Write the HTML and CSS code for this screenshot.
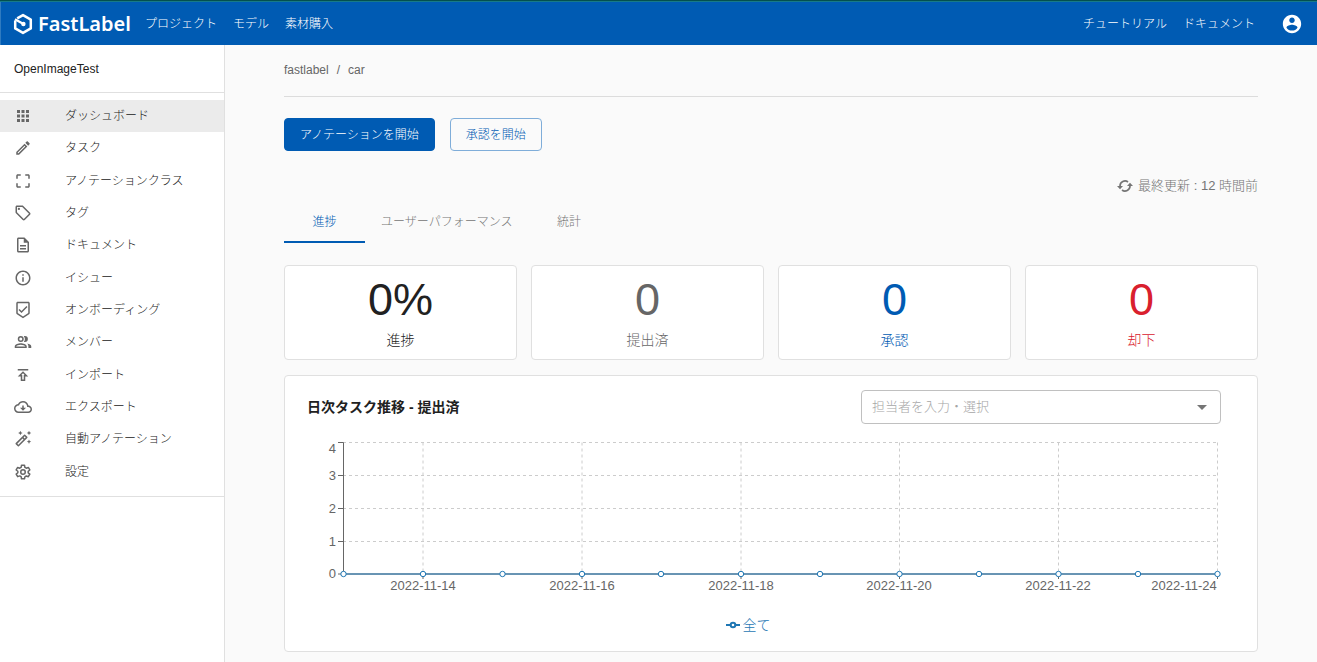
FILE: index.html
```html
<!DOCTYPE html>
<html lang="ja">
<head>
<meta charset="utf-8">
<meta name="viewport" content="width=device-width, initial-scale=1">
<title>FastLabel</title>
<link rel="stylesheet" href="styles.css">
</head>
<body>
<header class="topbar">
  <a class="brand" href="#">
    <svg class="brand-mark" viewBox="0 0 22 22" aria-hidden="true"><path d="M3.200 7.600V15.400L11 19.900l7.800-4.500V6.600L11 2.100 5.200 5.400" fill="none" stroke="#fff" stroke-width="2.500" stroke-linejoin="round"/><path d="M3 6.200 11 10.800" fill="none" stroke="#fff" stroke-width="2.200"/><circle cx="11.400" cy="11" r="2.200" fill="#fff"/></svg>
    <span class="brand-name">FastLabel</span>
  </a>
  <nav class="topnav">
    <a href="#">プロジェクト</a>
    <a href="#">モデル</a>
    <a href="#">素材購入</a>
  </nav>
  <nav class="topnav topnav-end">
    <a href="#">チュートリアル</a>
    <a href="#">ドキュメント</a>
  </nav>
  <button class="account" type="button" aria-label="アカウント"><svg viewBox="0 0 24 24"><path d="M12 2C6.48 2 2 6.48 2 12s4.48 10 10 10 10-4.48 10-10S17.52 2 12 2zm0 3c1.66 0 3 1.34 3 3s-1.34 3-3 3-3-1.34-3-3 1.34-3 3-3zm0 14.200c-2.500 0-4.710-1.280-6-3.220.030-1.990 4-3.080 6-3.080 1.990 0 5.970 1.090 6 3.080-1.290 1.940-3.500 3.220-6 3.220z"/></svg></button>
</header>
<div class="shell">
  <aside class="sidebar">
    <div class="project-name">OpenImageTest</div>
    <nav class="menu">
      <a class="menu-item is-active" href="#"><svg viewBox="0 0 24 24"><path d="M4 8h4V4H4v4zm6 12h4v-4h-4v4zm-6 0h4v-4H4v4zm0-6h4v-4H4v4zm6 0h4v-4h-4v4zm6-10v4h4V4h-4zm-6 4h4V4h-4v4zm6 6h4v-4h-4v4zm0 6h4v-4h-4v4z"/></svg>ダッシュボード</a>
      <a class="menu-item" href="#"><svg viewBox="0 0 24 24"><path d="M14.060 9.020l.92.920L5.920 19H5v-.920l9.060-9.060M17.660 3c-.250 0-.510.100-.700.290l-1.830 1.830 3.750 3.750 1.830-1.830c.390-.390.390-1.020 0-1.410l-2.340-2.340c-.200-.200-.450-.290-.710-.290zm-3.600 3.190L3 17.250V21h3.750L17.810 9.940l-3.750-3.750z"/></svg>タスク</a>
      <a class="menu-item" href="#"><svg viewBox="0 0 24 24"><path d="M3 5v4h2V5h4V3H5c-1.100 0-2 .900-2 2zm2 10H3v4c0 1.100.900 2 2 2h4v-2H5v-4zm14 4h-4v2h4c1.100 0 2-.900 2-2v-4h-2v4zm0-16h-4v2h4v4h2V5c0-1.100-.900-2-2-2z"/></svg>アノテーションクラス</a>
      <a class="menu-item" href="#"><svg viewBox="0 0 24 24"><path d="M21.410 11.580l-9-9C12.050 2.220 11.550 2 11 2H4c-1.100 0-2 .900-2 2v7c0 .550.220 1.050.590 1.420l9 9c.360.360.860.580 1.410.580s1.050-.220 1.410-.590l7-7c.370-.360.590-.860.590-1.410s-.230-1.060-.590-1.420zM13 20.010L4 11V4h7v-.010l9 9-7 7.020z"/><circle cx="6.500" cy="6.500" r="1.500"/></svg>タグ</a>
      <a class="menu-item" href="#"><svg viewBox="0 0 24 24"><path d="M8 16h8v2H8zm0-4h8v2H8zm6-10H6c-1.100 0-2 .900-2 2v16c0 1.100.890 2 1.990 2H18c1.100 0 2-.900 2-2V8l-6-6zm4 18H6V4h7v5h5v11z"/></svg>ドキュメント</a>
      <a class="menu-item" href="#"><svg viewBox="0 0 24 24"><path d="M11 7h2v2h-2zm0 4h2v6h-2zm1-9C6.480 2 2 6.480 2 12s4.480 10 10 10 10-4.480 10-10S17.520 2 12 2zm0 18c-4.410 0-8-3.590-8-8s3.590-8 8-8 8 3.590 8 8-3.590 8-8 8z"/></svg>イシュー</a>
      <a class="menu-item" href="#"><svg viewBox="0 0 24 24"><path d="M19 1H5c-1.100 0-1.990.900-1.990 2L3 15.930c0 .690.350 1.300.880 1.660L12 23l8.110-5.410c.530-.360.880-.970.880-1.660L21 3c0-1.100-.900-2-2-2zm-7 19.600l-7-4.660V3h14v12.930l-7 4.670zm-2.010-7.420l-2.580-2.590L6 12l4 4 8-8-1.420-1.420z"/></svg>オンボーディング</a>
      <a class="menu-item" href="#"><svg viewBox="0 0 24 24"><path d="M9 13.500c-3 0-8 1.400-8 4.200V20h16v-2.300c0-2.800-5-4.200-8-4.200zM3 18v-.400c.4-.900 3.300-2.100 6-2.100s5.600 1.200 6 2.100v.4H3zM9 12a4 4 0 1 0 0-8 4 4 0 0 0 0 8zm0-6a2 2 0 1 1 0 4 2 2 0 0 1 0-4zm5.500 6a4 4 0 1 0 0-8c-.5 0-1 .1-1.400.300a6 6 0 0 1 0 7.400c.4.200.9.300 1.400.300zm3 2c1 .9 1.700 2.100 1.700 3.700V20H23v-2.300c0-2-2.500-3.200-5.500-3.700z"/></svg>メンバー</a>
      <a class="menu-item" href="#"><svg viewBox="0 0 24 24"><path d="M5 4v2h14V4H5zm0 10h4v6h6v-6h4l-7-7-7 7zm8-2v6h-2v-6H9.830L12 9.830 14.170 12H13z"/></svg>インポート</a>
      <a class="menu-item" href="#"><svg viewBox="0 0 24 24"><path d="M19.350 10.040C18.670 6.590 15.640 4 12 4 9.110 4 6.600 5.640 5.350 8.040 2.340 8.360 0 10.910 0 14c0 3.310 2.690 6 6 6h13c2.760 0 5-2.240 5-5 0-2.640-2.050-4.780-4.650-4.960zM19 18H6c-2.210 0-4-1.790-4-4s1.790-4 4-4h.710C7.370 7.690 9.480 6 12 6c3.040 0 5.500 2.460 5.500 5.500v.500H19c1.660 0 3 1.340 3 3s-1.340 3-3 3zm-6-8h-2v3H8l4 4 4-4h-3z"/></svg>エクスポート</a>
      <a class="menu-item" href="#"><svg viewBox="0 0 24 24"><path d="M20 7l.940-2.060L23 4l-2.060-.940L20 1l-.940 2.060L17 4l2.060.940zM8.500 7l.940-2.060L11.500 4l-2.060-.940L8.500 1l-.940 2.060L5.500 4l2.060.940zM20 12.500l-.940 2.060-2.060.940 2.060.940.940 2.060.940-2.060L23 15.500l-2.060-.940zM17.710 9.120l-2.830-2.830a1 1 0 0 0-1.410 0L2.290 17.460a1 1 0 0 0 0 1.410l2.830 2.830a1 1 0 0 0 1.410 0l11.170-11.170a1 1 0 0 0 .010-1.410zM14.210 8.420l1.410 1.410-1.420 1.420-1.410-1.410zM5.830 19.590l-1.410-1.410 6.910-6.910 1.410 1.410z"/></svg>自動アノテーション</a>
      <a class="menu-item" href="#"><svg viewBox="0 0 24 24" fill="none"><path class="line" d="M10 3h4l.5 2.800 1.900 1.100 2.700-1 2 3.400-2.200 1.800v2l2.200 1.800-2 3.400-2.700-1-1.900 1.100L14 21h-4l-.5-2.700-1.900-1.100-2.700 1-2-3.400 2.200-1.800v-2L2.900 9.300l2-3.400 2.700 1 1.900-1.100z"/><circle class="line" cx="12" cy="12" r="3"/></svg>設定</a>
    </nav>
  </aside>
  <main class="content">
    <nav class="breadcrumb"><a href="#">fastlabel</a><span>/</span><a href="#">car</a></nav>
    <div class="actions">
      <button class="btn btn-primary" type="button">アノテーションを開始</button>
      <button class="btn btn-outline" type="button">承認を開始</button>
    </div>
    <div class="updated"><svg viewBox="0 0 24 24" aria-hidden="true"><path d="M4.500 13.500V12A7.500 7.500 0 0 1 16.500 6M19.500 10.500V12A7.500 7.500 0 0 1 7.500 18" fill="none" stroke="currentColor" stroke-width="2.500"/><path d="M0 12h9l-4.500 5zM15 12h9l-4.500-5z"/></svg><span>最終更新 : 12 時間前</span></div>
    <div class="tabs" role="tablist">
      <button class="tab is-selected" type="button" role="tab" aria-selected="true">進捗</button>
      <button class="tab" type="button" role="tab" aria-selected="false">ユーザーパフォーマンス</button>
      <button class="tab" type="button" role="tab" aria-selected="false">統計</button>
    </div>
    <section class="stats">
      <div class="stat"><span class="stat-value">0%</span><span class="stat-label">進捗</span></div>
      <div class="stat stat-muted"><span class="stat-value">0</span><span class="stat-label">提出済</span></div>
      <div class="stat stat-blue"><span class="stat-value">0</span><span class="stat-label">承認</span></div>
      <div class="stat stat-red"><span class="stat-value">0</span><span class="stat-label">却下</span></div>
    </section>
    <section class="panel">
      <div class="panel-head">
        <h2 class="panel-title">日次タスク推移 - 提出済</h2>
        <div class="combo">
          <input class="combo-input" type="text" aria-label="担当者" placeholder="担当者を入力・選択">
          <button class="combo-toggle" type="button" aria-label="開く"><svg viewBox="0 0 24 24"><path d="M7 10l5 5 5-5z"/></svg></button>
        </div>
      </div>
      <svg class="chart" viewBox="0 0 914 168" role="img" aria-label="日次タスク推移">
        <path class="grid" d="M36 8.500H911M36 41.500H911M36 74.500H911M36 107.500H911M116 8.500V140M275 8.500V140M434 8.500V140M592.500 8.500V140M751.500 8.500V140M910.500 8.500V140"/>
        <path class="axis" d="M36.500 8.500V140M31 8.500h5.500M31 41.500h5.500M31 74.500h5.500M31 107.500h5.500M31 140h5.500M116 140v5M275 140v5M434 140v5M592.500 140v5M751.500 140v5M910.500 140v5M36 140H911"/>
        <path class="series" d="M36.500 140H910.500"/>
        <g class="dots"><circle cx="36.500" cy="140" r="2.700"/><circle cx="116" cy="140" r="2.700"/><circle cx="195.500" cy="140" r="2.700"/><circle cx="275" cy="140" r="2.700"/><circle cx="354" cy="140" r="2.700"/><circle cx="434" cy="140" r="2.700"/><circle cx="513" cy="140" r="2.700"/><circle cx="592.500" cy="140" r="2.700"/><circle cx="672" cy="140" r="2.700"/><circle cx="751.500" cy="140" r="2.700"/><circle cx="831" cy="140" r="2.700"/><circle cx="910.500" cy="140" r="2.700"/></g>
        <g class="tick tick-y"><text x="29" y="19">4</text><text x="29" y="46">3</text><text x="29" y="79">2</text><text x="29" y="112">1</text><text x="29" y="144">0</text></g>
        <g class="tick tick-x"><text x="116" y="156">2022-11-14</text><text x="275" y="156">2022-11-16</text><text x="434" y="156">2022-11-18</text><text x="592" y="156">2022-11-20</text><text x="751" y="156">2022-11-22</text><text x="877" y="156">2022-11-24</text></g>
      </svg>
      <div class="legend"><svg viewBox="0 0 14 14" aria-hidden="true"><path d="M0 7h4.500M9.500 7H14"/><circle cx="7" cy="7" r="2.300"/></svg><span>全て</span></div>
    </section>
  </main>
</div>
</body>
</html>
```
FILE: styles.css
```css
* { box-sizing: border-box; }

body {
  margin: 0;
  min-height: 100vh;
  display: flex;
  flex-direction: column;
  background: #fafafa;
  color: #212121;
  font-family: "Liberation Sans", "Noto Sans CJK JP", sans-serif;
  font-size: 12px;
  font-weight: 300;
  line-height: 20px;
}

a { color: inherit; text-decoration: none; }
button { font: inherit; cursor: pointer; }
svg { display: block; fill: currentColor; flex: none; }

.topbar {
  display: flex;
  align-items: center;
  height: 45px;
  padding: 1px 14px 0 12px;
  background: #005bb3;
  border-top: 1px solid #04504f;
  box-shadow: inset 0 1px #177a88, inset 1px 0 #2f7bc0;
  color: #fff;
}
.brand { display: flex; align-items: center; gap: 4px; }
.brand-mark { width: 22px; height: 22px; }
.brand-name {
  font-family: "Noto Sans", sans-serif;
  font-size: 20px;
  font-weight: 600;
  line-height: 24px;
}
.topnav { display: flex; gap: 16px; margin-left: 14px; }
.topnav-end { margin-left: auto; }
.account {
  margin-left: 26px;
  padding: 0;
  border: 0;
  background: none;
  color: #fff;
}
.account svg { width: 22px; height: 22px; }

.shell { display: flex; flex: 1; align-items: stretch; }

.sidebar {
  flex: none;
  width: 225px;
  background: #fff;
  border-right: 1px solid #e0e0e0;
}
.project-name {
  padding: 14px 14px 13px;
  border-bottom: 1px solid #e0e0e0;
  margin-bottom: 7px;
}
.menu {
  display: grid;
  grid-auto-rows: 1fr;
  min-height: 397px;
  padding-bottom: 8px;
  border-bottom: 1px solid #e0e0e0;
}
.menu-item {
  display: flex;
  align-items: center;
  gap: 33px;
  padding: 0 14px;
}
.menu-item svg { width: 18px; height: 18px; color: #666; }
.menu-item .line { fill: none; stroke: currentColor; stroke-width: 2; stroke-linejoin: round; }
.menu-item.is-active { background: #ebebeb; }

.content { flex: 1; min-width: 0; padding: 0 59px 10px; }

.breadcrumb {
  display: flex;
  gap: 8px;
  padding: 15px 0 16px;
  border-bottom: 1px solid #dcdcdc;
  color: #666;
}
.actions { display: flex; gap: 15px; padding-top: 21px; }
.btn {
  height: 33px;
  padding: 0 15px;
  border: 1px solid #005bb3;
  border-radius: 4px;
}
.btn-primary { background: #005bb3; color: #fff; }
.btn-outline { background: none; border-color: #7fadd9; color: #005bb3; }

.updated {
  display: flex;
  align-items: center;
  justify-content: flex-end;
  gap: 5px;
  padding-top: 25px;
  color: #757575;
  font-size: 13px;
}
.updated svg { width: 16px; height: 16px; }

.tabs { display: flex; padding: 4px 0 22px; }
.tab {
  min-width: 81px;
  height: 43px;
  padding: 2px 16px 0;
  border: 0;
  border-bottom: 2px solid transparent;
  background: none;
  color: #757575;
}
.tab.is-selected { border-color: #005bb3; color: #005bb3; }

.stats {
  display: grid;
  grid-template-columns: repeat(4, 1fr);
  gap: 14px;
  margin-bottom: 15px;
}
.stat {
  display: flex;
  flex-direction: column;
  align-items: center;
  padding: 8px 0 6px;
  border: 1px solid #e0e0e0;
  border-radius: 4px;
  background: #fff;
}
.stat-value { font-size: 45px; line-height: 52px; }
.stat-label { padding-top: 2px; font-size: 14px; line-height: 25px; }
.stat-muted { color: #666; }
.stat-blue { color: #005bb3; }
.stat-red { color: #d9202e; }

.panel {
  padding: 14px 36px 16px 22px;
  border: 1px solid #e0e0e0;
  border-radius: 4px;
  background: #fff;
}
.panel-head {
  display: flex;
  align-items: center;
  justify-content: space-between;
}
.panel-title { margin: 0; font-size: 14px; font-weight: 700; }
.combo {
  display: flex;
  align-items: center;
  width: 360px;
  height: 34px;
  padding: 0 6px 0 10px;
  border: 1px solid #c0c0c0;
  border-radius: 4px;
}
.combo-input {
  flex: 1;
  min-width: 0;
  padding: 0;
  border: 0;
  outline: 0;
  background: none;
  font: inherit;
  font-size: 13px;
}
.combo-input::placeholder { color: #a6a6a6; opacity: 1; }
.combo-toggle { padding: 0; border: 0; background: none; color: #757575; }
.combo-toggle svg { width: 24px; height: 24px; }

.chart { width: 100%; height: auto; margin-top: 10px; overflow: visible; }
.grid { fill: none; stroke: #ccc; stroke-dasharray: 3 3; }
.axis { fill: none; stroke: #666; }
.series { fill: none; stroke: #1f77b4; }
.dots { fill: #fff; stroke: #1f77b4; }
.tick { fill: #666; font-size: 13px; }
.tick-y { text-anchor: end; }
.tick-x { text-anchor: middle; }

.legend {
  display: flex;
  align-items: center;
  justify-content: center;
  gap: 3px;
  margin-top: 13px;
  padding-right: 32px;
  color: #1f77b4;
  font-size: 14px;
}
.legend svg { width: 14px; height: 14px; fill: none; stroke: #1f77b4; stroke-width: 2; }
```
